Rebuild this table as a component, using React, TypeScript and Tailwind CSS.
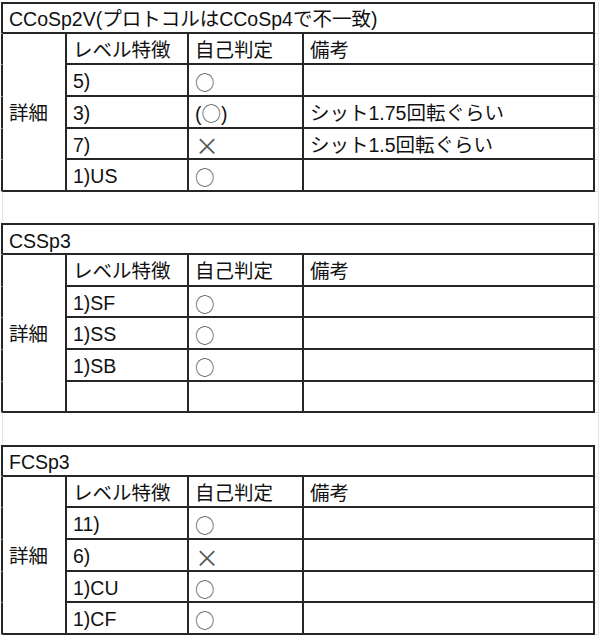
import React from 'react';

type Row = { level: string; mark: string; note: string };

type Section = { title: string; rows: Row[] };

const sections: Section[] = [
  {
    title: 'CCoSp2V(プロトコルはCCoSp4で不一致)',
    rows: [
      { level: '5)', mark: '○', note: '' },
      { level: '3)', mark: '(○)', note: 'シット1.75回転ぐらい' },
      { level: '7)', mark: '×', note: 'シット1.5回転ぐらい' },
      { level: '1)US', mark: '○', note: '' },
    ],
  },
  {
    title: 'CSSp3',
    rows: [
      { level: '1)SF', mark: '○', note: '' },
      { level: '1)SS', mark: '○', note: '' },
      { level: '1)SB', mark: '○', note: '' },
      { level: '', mark: '', note: '' },
    ],
  },
  {
    title: 'FCSp3',
    rows: [
      { level: '11)', mark: '○', note: '' },
      { level: '6)', mark: '×', note: '' },
      { level: '1)CU', mark: '○', note: '' },
      { level: '1)CF', mark: '○', note: '' },
    ],
  },
];

const cell = 'flex items-center pl-[6px] pt-[4px] border-r-2 border-b-2 border-[#262626] whitespace-nowrap';
const leftPad = 'border-r-2 border-[#262626] border-b border-b-[#e3e3e3]';
const rightPad = 'border-r border-[#e3e3e3] border-b';

function Mark({ value }: { value: string }) {
  if (!value) return null;
  if (value === '(○)') {
    return (
      <span>
        (<span className="font-['Noto_Sans_CJK_JP'] text-[#555]">○</span>)
      </span>
    );
  }
  if (value === '×') {
    return <span className="font-['Noto_Sans_CJK_JP'] text-[24px] leading-none text-[#555]">×</span>;
  }
  return <span className="font-['Noto_Sans_CJK_JP'] text-[#555]">{value}</span>;
}

function Table({ section }: { section: Section }) {
  return (
    <div className="grid grid-cols-[3px_64px_122px_115px_291px_1fr] grid-rows-[repeat(6,31.65px)]">
      <div className={leftPad} />
      <div className={`${cell} col-span-4 border-t-2`}>{section.title}</div>
      <div className={rightPad} />

      <div className={leftPad} />
      <div className={`${cell} row-span-5`}>詳細</div>
      <div className={cell}>レベル特徴</div>
      <div className={cell}>自己判定</div>
      <div className={cell}>備考</div>
      <div className={rightPad} />

      {section.rows.map((r, i) => (
        <React.Fragment key={i}>
          <div className={`${leftPad} col-start-1`} />
          <div className={`${cell} col-start-3`}>{r.level}</div>
          <div className={cell}>
            <Mark value={r.mark} />
          </div>
          <div className={cell}>{r.note}</div>
          <div className={rightPad} />
        </React.Fragment>
      ))}
    </div>
  );
}

function GapRow() {
  return (
    <div className="grid grid-cols-[3px_64px_122px_115px_291px_1fr] h-[31.65px]">
      <div className="border-r border-[#e3e3e3]" />
      <div className="col-span-4" />
      <div className="border-r border-[#e3e3e3]" />
    </div>
  );
}

export default function App() {
  return (
    <div className="w-[599px] h-[640px] bg-white overflow-hidden pt-[2px] text-[19.5px] leading-none text-[#111] font-['Liberation_Sans','Noto_Sans_CJK_JP',sans-serif]">
      <Table section={sections[0]} />
      <GapRow />
      <Table section={sections[1]} />
      <GapRow />
      <Table section={sections[2]} />
    </div>
  );
}
